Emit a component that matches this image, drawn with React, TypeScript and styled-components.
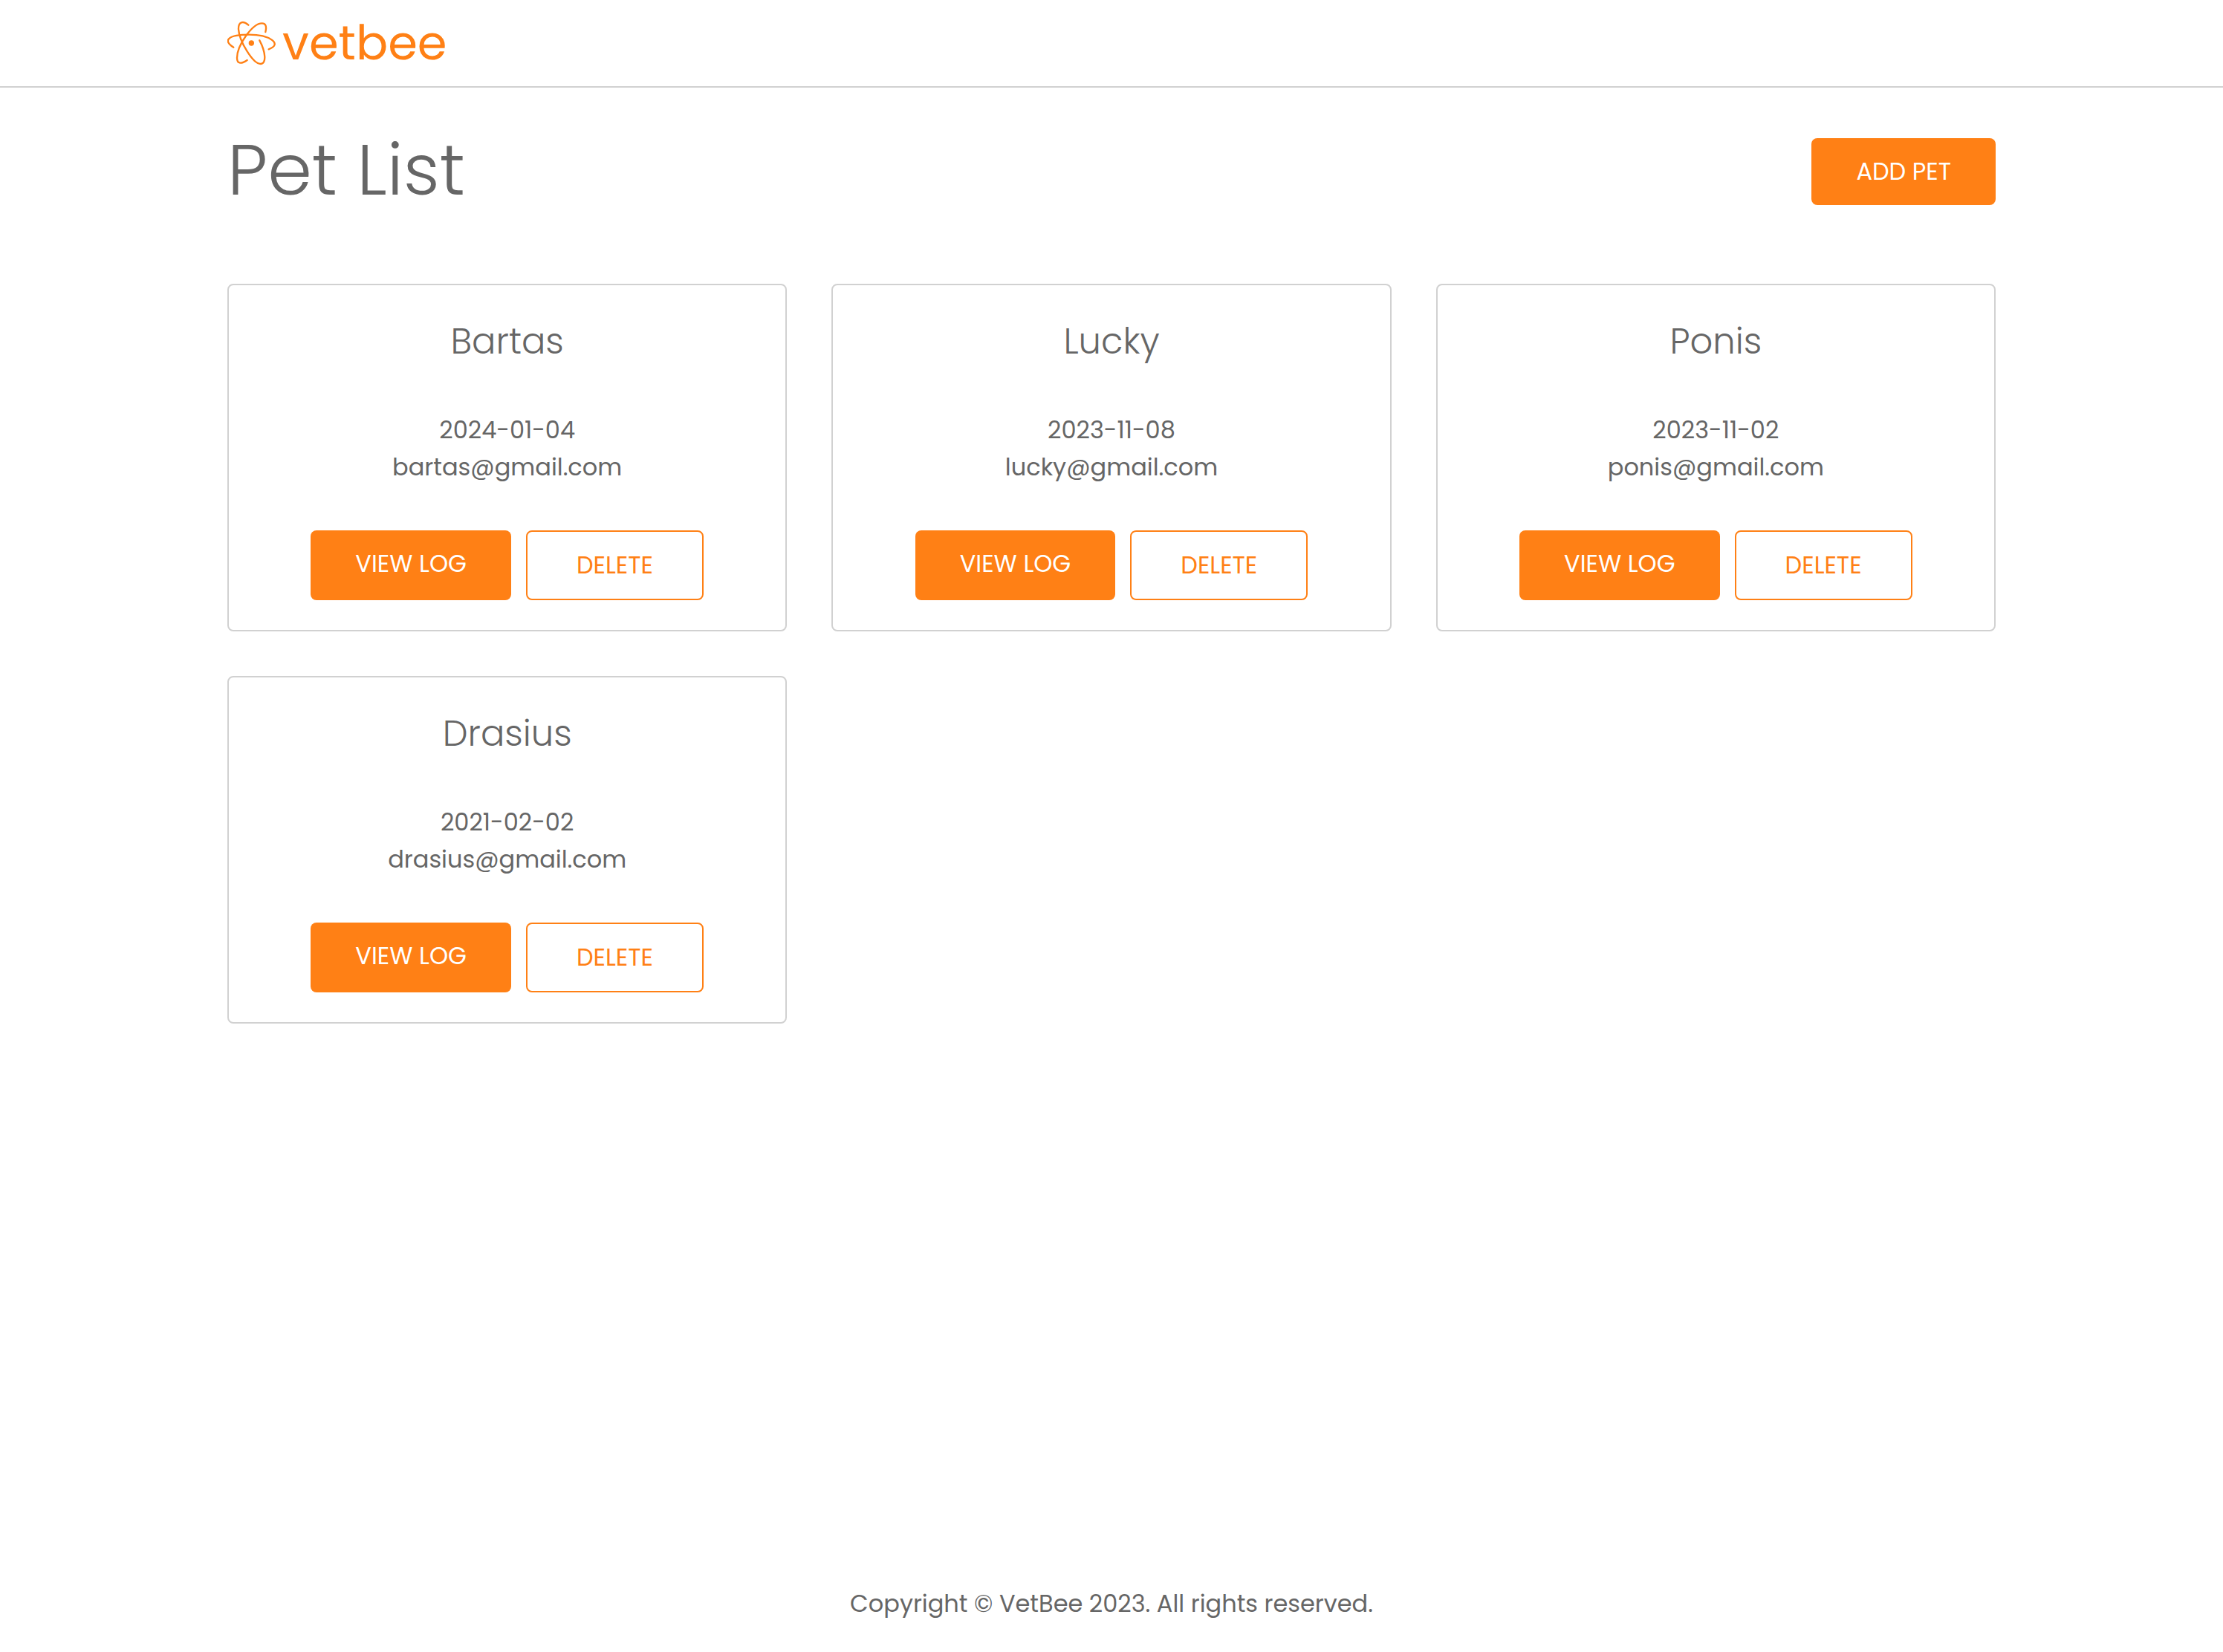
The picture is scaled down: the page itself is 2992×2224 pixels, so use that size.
import React from "react";
import styled, { createGlobalStyle, css } from "styled-components";

const orange = "#ff8015";
const grey = "#666666";
const line = "#d1d1d1";

const GlobalStyle = createGlobalStyle`
  *, *::before, *::after { box-sizing: border-box; }
  body {
    margin: 0;
    background: #fff;
    color: ${grey};
    font-family: Poppins, Inter, "Open Sans", sans-serif;
    font-size: 32px;
    line-height: 50px;
  }
`;

const Page = styled.div`
  min-height: 100vh;
  display: flex;
  flex-direction: column;
`;

const Container = styled.div`
  width: 100%;
  max-width: 2420px;
  margin: 0 auto;
  padding: 0 20px;
`;

const Header = styled.header`
  padding: 26px 0;
  border-bottom: 2px solid ${line};
`;

const Brand = styled.a`
  display: flex;
  align-items: center;
  gap: 8px;
  width: fit-content;
  color: ${orange};
  font-size: 64px;
  line-height: 64px;
  text-decoration: none;
`;

const BrandMark = styled.svg`
  width: 66px;
  height: 60px;
  fill: none;
  stroke: currentColor;
  stroke-width: 7;
  stroke-linecap: round;
`;

const Main = styled.main`
  flex: 1;
  padding: 68px 0 60px;
`;

const TitleBar = styled.div`
  display: flex;
  align-items: flex-start;
  justify-content: space-between;
  margin-bottom: 106px;
`;

const Title = styled.h1`
  margin: 0;
  font-size: 96px;
  font-weight: 300;
  line-height: 86px;
`;

const Grid = styled.ul`
  display: grid;
  grid-template-columns: repeat(3, 1fr);
  gap: 60px;
  margin: 0;
  padding: 0;
  list-style: none;
`;

const Card = styled.li`
  display: flex;
  flex-direction: column;
  align-items: center;
  padding: 40px;
  border: 2px solid ${line};
  border-radius: 8px;
  text-align: center;
`;

const PetName = styled.h2`
  margin: 0 0 58px;
  font-size: 48px;
  font-weight: 300;
  line-height: 72px;
`;

const Detail = styled.p`
  margin: 0;
`;

const Actions = styled.div`
  display: flex;
  gap: 20px;
  margin-top: 60px;
`;

const control = css`
  border-radius: 8px;
  font: inherit;
  text-transform: uppercase;
  cursor: pointer;
`;

const LinkButton = styled.a`
  ${control}
  padding: 20px 60px;
  background: ${orange};
  color: #fff;
  text-decoration: none;
`;

const OutlineButton = styled.button`
  ${control}
  padding: 20px 66px;
  border: 2px solid ${orange};
  background: #fff;
  color: ${orange};
`;

const Footer = styled.footer`
  padding: 40px 0;
  text-align: center;
`;

const pets = [
  { name: "Bartas", dob: "2024-01-04", email: "bartas@gmail.com" },
  { name: "Lucky", dob: "2023-11-08", email: "lucky@gmail.com" },
  { name: "Ponis", dob: "2023-11-02", email: "ponis@gmail.com" },
  { name: "Drasius", dob: "2021-02-02", email: "drasius@gmail.com" },
];

export default function App() {
  return (
    <Page>
      <GlobalStyle />
      <Header>
        <Container>
          <Brand href="/">
            <BrandMark viewBox="47 84 198 180" aria-hidden="true">
              <path d="M72 191C26 162 52 140 135 140C218 140 272 178 214 199" />
              <path d="M132 101C110 82 91 88 92 118C95 166 150 258 181 258C206 258 202 210 177 163" />
              <path d="M201 129C207 103 200 94 187 94C147 94 86 185 86 234C86 260 105 258 127 243" />
              <circle cx="144" cy="174" r="11" fill="currentColor" stroke="none" />
            </BrandMark>
            vetbee
          </Brand>
        </Container>
      </Header>
      <Main>
        <Container>
          <TitleBar>
            <Title>Pet List</Title>
            <LinkButton href="/add">Add Pet</LinkButton>
          </TitleBar>
          <Grid>
            {pets.map((pet) => (
              <Card key={pet.email}>
                <PetName>{pet.name}</PetName>
                <Detail>{pet.dob}</Detail>
                <Detail>{pet.email}</Detail>
                <Actions>
                  <LinkButton href="/log">View Log</LinkButton>
                  <OutlineButton type="button">Delete</OutlineButton>
                </Actions>
              </Card>
            ))}
          </Grid>
        </Container>
      </Main>
      <Footer>Copyright © VetBee 2023. All rights reserved.</Footer>
    </Page>
  );
}
